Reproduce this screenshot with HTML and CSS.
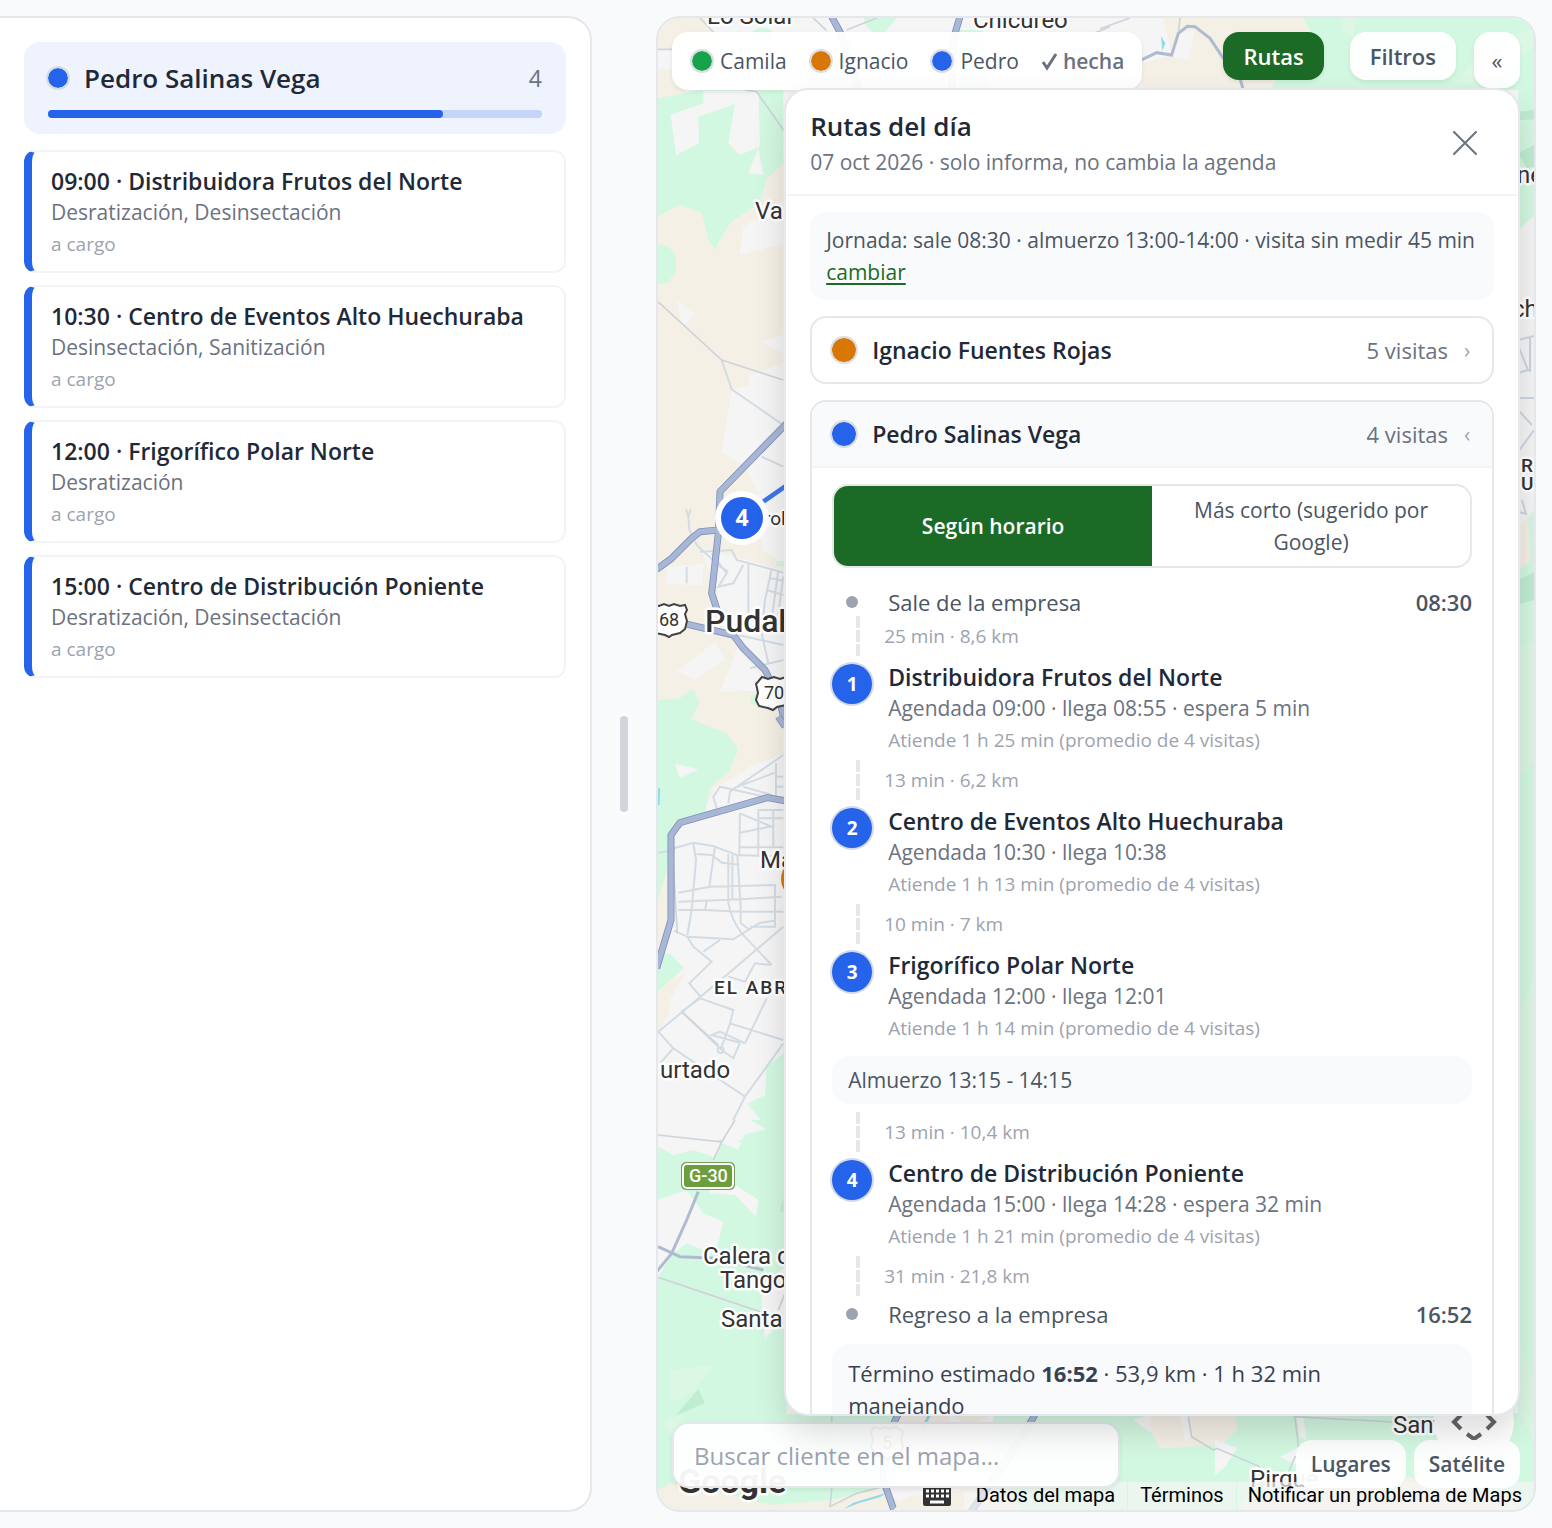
FILE: index.html
```html
<!DOCTYPE html>
<html lang="es">
<head>
<meta charset="utf-8">
<meta name="viewport" content="width=device-width, initial-scale=1">
<title>Rutas del día</title>
<link rel="stylesheet" href="styles.css">
</head>
<body>
<main class="board">
  <section class="agenda" aria-label="Agenda">
    <header class="tech">
      <div class="tech-row">
        <span class="dot dot-blue"></span>
        <h2 class="tech-name">Pedro Salinas Vega</h2>
        <span class="tech-count">4</span>
      </div>
      <div class="bar"><div class="bar-fill" style="width:80%"></div></div>
    </header>
    <article class="visit">
      <h3 class="item-title">09:00 · Distribuidora Frutos del Norte</h3>
      <p class="item-sub">Desratización, Desinsectación</p>
      <p class="item-note">a cargo</p>
    </article>
    <article class="visit">
      <h3 class="item-title">10:30 · Centro de Eventos Alto Huechuraba</h3>
      <p class="item-sub">Desinsectación, Sanitización</p>
      <p class="item-note">a cargo</p>
    </article>
    <article class="visit">
      <h3 class="item-title">12:00 · Frigorífico Polar Norte</h3>
      <p class="item-sub">Desratización</p>
      <p class="item-note">a cargo</p>
    </article>
    <article class="visit">
      <h3 class="item-title">15:00 · Centro de Distribución Poniente</h3>
      <p class="item-sub">Desratización, Desinsectación</p>
      <p class="item-note">a cargo</p>
    </article>
  </section>

  <div class="splitter" role="separator" aria-orientation="vertical"><span class="grip"></span></div>

  <section class="map" aria-label="Mapa">
    <svg class="map-art" viewBox="658 18 876 1492" preserveAspectRatio="xMinYMin slice" aria-hidden="true">
      <rect class="m-city" x="658" y="18" width="876" height="1492"/>
      <!-- north-west -->
      <g transform="translate(650 0) scale(.33333)">
        <path class="m-sand" d="M24 54H150L195 96V145H24ZM24 205L70 212 120 262 100 280 24 295Z"/>
        <path class="m-green" d="M24 295L160 268H400V490L350 540 330 610 240 670 195 750 175 720 155 640 90 615 24 650Z"/>
        <path class="m-sand" d="M24 650L90 615 155 640 175 720 195 750 240 670 330 610 350 540 400 490V900H24Z"/>
        <path class="m-green" d="M24 730L58 742 77 768V820L50 850 24 852ZM640 54H740L690 115 650 80ZM305 96Q340 70 370 96V130H300ZM920 90H1000L1020 265H930Z"/>
        <path class="m-city" d="M160 272H325L330 440 268 465 235 430 255 312 145 350 147 430 78 465 62 345 160 310ZM325 445L340 525 295 520ZM280 680L325 655 400 600V730L270 765Z"/>
        <path class="m-lane" d="M24 148H66M285 270L320 275 400 390M490 54L530 92M150 54L190 96M590 90L680 54M570 96L620 160M1335 98L1380 80"/>
        <path class="m-hwy-edge" d="M545 50L570 96 600 190 625 270M930 50L912 110 905 270"/>
        <path class="m-hwy" d="M545 50L570 96 600 190 625 270M930 50L912 110 905 270"/>
      </g>
      <!-- north-east -->
      <g transform="translate(1100 0) scale(.33333)">
        <path class="m-sand" d="M190 54H610L640 110 600 180 540 215 510 270H126V190L215 165Z"/>
        <path class="m-city" d="M238 100L285 90 265 180 215 170Z"/>
        <path class="m-green" d="M610 54H1310V640L1255 690V270H510L540 215 600 180 640 110Z"/>
        <path class="m-green-soft" d="M720 54H770L760 110 730 95ZM1070 250L1120 180 1300 80V140L1180 250Z"/>
        <path class="m-green-dark" d="M1255 335L1310 328V358L1255 360ZM1255 460L1310 430V500L1280 505Z"/>
        <path class="m-water" d="M183 108L196 130 187 152Z"/>
        <path class="m-lane" d="M0 86L90 54M240 54L236 95M1262 750L1270 720"/>
        <path class="m-river" d="M120 182L170 158 215 165 235 100 262 79 285 80 330 115 370 175 420 235 430 270"/>
      </g>
      <!-- Pudahuel -->
      <g transform="translate(650 300) scale(.33333)">
        <path class="m-sand" d="M24 -5H400V190L295 228 300 255 245 270 215 455 290 505 330 600 335 750 400 790V810L150 742 200 870 215 980 340 1130 400 1180V1265H24Z"/>
        <path class="m-city" d="M80 0L135 40 98 82ZM330 125L400 105V160ZM52 800L162 792 155 855 48 852ZM82 1112L195 1025 225 1080 132 1140ZM262 1045L330 1125 320 1172 210 1175Z"/>
        <path class="m-green" d="M24 1200L90 1195 128 1165 148 1205 120 1265H24ZM380 785L402 782V798H378ZM302 1185H320L345 1222 302 1212Z"/>
        <path class="m-grid" d="M215 180L245 268 400 375M335 470L400 500M108 628L115 650 118 690 140 735 210 800 235 815M122 628L115 652M150 755L245 750 260 780 365 808 345 900 335 1000 355 1090M295 790V990M185 760L230 820 205 860 250 850 280 795M365 808L400 818M362 835L400 842M350 870L400 885M385 810L365 960M400 830L380 980M110 800V850M265 1005L400 1035M300 1105L400 1080"/>
        <path class="m-lane" d="M24 5L215 180 400 240"/>
        <path class="m-hwy-edge" d="M410 370L210 575 205 700 185 880 205 940M205 690L150 695 125 715 65 775 20 808M100 970L250 1005 280 1045 345 1110 385 1190 405 1265"/>
        <path class="m-hwy" d="M410 370L210 575 205 700 185 880 205 940M205 690L150 695 125 715 65 775 20 808M100 970L250 1005 280 1045 345 1110 385 1190 405 1265"/>
        <path class="m-route" d="M340 605L410 556"/>
      </g>
      <!-- Maipú and Padre Hurtado -->
      <g transform="translate(650 720) scale(.33333)">
        <path class="m-sand" d="M118 -5H410V100L300 140 200 210 160 260 24 530V935L60 820 120 780 60 700 70 300Z"/>
        <path class="m-green" d="M24 -5H118L190 25 225 35 265 85 240 150 180 205 165 280 60 340V450L24 540ZM24 705L60 705 102 745 24 812ZM410 965V1265H265L300 1210 355 1225 290 1150 345 1125 350 1040Z"/>
        <path class="m-city" d="M75 132L145 148 90 175ZM190 205L400 100V1000L345 1045 345 1125 285 1155 350 1225 290 1260H24V935L80 780 24 700 65 600V330L180 270Z"/>
        <path class="m-green" d="M24 705L60 700 102 745 24 812Z"/>
        <path class="m-sand" d="M24 815L110 752 60 840 58 880 24 935ZM30 520L60 420V590L24 690Z"/>
        <path class="m-grid" d="M200 265L190 230 210 200 390 240M235 250L240 215 400 105M250 205L375 158M280 200L365 225M378 130V240M380 170H400M380 200H400M24 398L75 390M72 385L130 368 190 378 260 405 400 410M130 368L138 420 125 570 112 645M195 380L178 500M140 402L185 405 215 428 268 434M235 402V550Q245 600 275 640L365 735M247 405V540M262 405L272 560V610L300 630M270 280L268 408M270 280L370 322M325 405V270H400M325 295H400M270 338L370 318V380M370 270V380M268 382H400M85 518L180 500 375 495V605M85 545L270 538 395 530M85 570H165L272 575H400M170 545L165 570M112 650L250 658 330 608 375 602V620H300M72 632L112 650 130 680 185 725 118 790 150 828M160 695L210 660M235 770L285 785 315 730 360 735M400 620L230 765 25 935M95 875L150 835 250 870 240 910 400 960M95 875L215 990 250 1015 270 968M240 910L215 980M285 970L350 835M270 968L185 945 210 935 285 970M25 935L70 985 285 1130 400 970M70 985L30 1030M285 1130L220 1260M24 1245L215 1262"/>
        <path class="m-lane" d="M70 440L82 640M95 875L205 975"/>
        <circle class="m-grid" cx="212" cy="990" r="9"/>
        <path class="m-hwy-edge" d="M410 243L352 233 90 308 63 345V600L20 745M385 -10L405 20"/>
        <path class="m-hwy" d="M410 243L352 233 90 308 63 345V600L20 745M385 -10L405 20"/>
        <path class="m-water-line" d="M26 205L24 255"/>
      </g>
      <!-- Calera de Tango -->
      <g transform="translate(650 1120) scale(.33333)">
        <path class="m-green" d="M24 60L70 105 130 90 190 110 215 68 265 90 300 0H410V900H560L570 1180H24Z"/>
        <path class="m-city" d="M170 185L215 170 325 240 318 290 255 225 180 220ZM24 240L110 210 160 280 220 305 195 405 110 370 70 400 24 470ZM24 0H300L350 28 210 60 70 105 24 80ZM335 500L405 440V590L345 655 335 570Z"/>
        <path class="m-green-soft" d="M60 750L190 735 130 815 60 850ZM100 880L65 945 40 905Z"/>
        <path class="m-green-dark" d="M145 808L165 850 75 888ZM400 235V275L390 272Z"/>
        <path class="m-sand" d="M24 1110L60 1090 220 1120 340 1150 540 1110 700 1110 800 1180H24ZM700 880H900V910H700Z"/>
        <path class="m-green" d="M400 882H735V1095L540 1140 360 1155 280 1080Z"/>
        <path class="m-lane" d="M24 45L215 66 190 120M215 66L255 0M24 472L330 575M385 570L405 520M545 885V1110L540 1160 620 1120 720 1095"/>
        <path class="m-river" d="M145 215L110 300 65 400 20 455M24 380L90 410 200 415 340 450"/>
        <path class="m-water" d="M580 1168L610 1148 710 1118 690 1132 625 1150Z"/>
        <path class="m-hwy-edge" d="M745 880L700 980V1080L735 1180"/>
        <path class="m-hwy" d="M745 880L700 980V1080L735 1180"/>
        <path class="m-water-line" d="M840 882L815 930"/>
      </g>
      <!-- south -->
      <g transform="translate(1100 1300) scale(.33333)">
        <path class="m-green" d="M-320 340H1310V650H-320Z"/>
        <path class="m-sand" d="M-580 590L-320 560-200 650H-640ZM-440 345H-330L-400 385ZM150 345H405L415 385 370 430 270 440 180 445 155 400 100 360ZM430 600L600 570 930 530 1010 560 1300 580V640H420Z"/>
        <path class="m-city" d="M345 420L412 445 375 500 345 525ZM100 360L150 345 155 400ZM240 345H270L280 410 255 420ZM540 470L600 440 600 500ZM590 350H610L620 420 600 410Z"/>
        <path class="m-hwy-edge" d="M-195 345L-260 450-390 640"/>
        <path class="m-hwy" d="M-195 345L-260 450-390 640"/>
        <path class="m-lane" d="M265 350L275 410 340 450 350 445 480 500M580 350L880 366M585 350L595 440M565 520L585 470 620 480"/>
      </g>
      <!-- east edge -->
      <g>
        <rect class="m-city" x="1518" y="230" width="18" height="160"/>
        <path class="m-green" d="M1518 530L1534 510V1510H1518Z"/>
        <path class="m-green-dark" d="M1518 580L1534 572V600L1518 604Z"/>
        <path class="m-green-soft" d="M1518 650L1534 640V760L1518 780ZM1518 1010L1534 980V1120H1518ZM1518 1340L1534 1380V1440L1518 1410Z"/>
        <path class="m-sand" d="M1518 530L1528 515 1531 560 1518 570Z"/>
        <path d="M1518 340L1534 336M1518 345L1528 370 1518 373M1530 337V372M1518 398H1534M1518 410L1532 425M1518 452L1534 430M1522 500L1526 514 1519 512" fill="none" stroke="#cdd6e0" stroke-width="2"/>
      </g>

      <!-- road shields -->
      <g class="m-shield">
        <path d="M652 604l7 2 5-2 5 2 5-2 6 2 5-1 2 5-2 4 2 7-2 8-5 4-8 2-3 2-4-2-10-2z"/>
        <path d="M762 677l6 2 6-2 6 2 6-2v28l-9 2-4 3-5-2-9-2-3-6 2-7-1-5-1-4z"/>
        <path d="M874 1427l6 2 5-2 5 2 6-2 7 5-2 7 2 8-4 8-8 2-3 3-4-3-9-2-4-8 2-7-2-8z"/>
      </g>
      <text class="m-num" x="659" y="626">68</text>
      <text class="m-num" x="764" y="699">70</text>
      <text class="m-num" x="882" y="1449">5</text>
      <rect x="681" y="1162" width="54" height="28" rx="5" fill="#7d9b5a"/>
      <rect x="683" y="1164" width="50" height="24" rx="4" fill="#6b9e3c" stroke="#fff" stroke-width="2"/>
      <text class="m-sign" x="689" y="1182">G-30</text>

      <!-- place names -->
      <g class="m-place">
        <text x="707" y="24">Lo Solar</text>
        <text x="973" y="28">Chicureo</text>
        <text x="755" y="219">Va</text>
        <text x="660" y="1078">urtado</text>
        <text x="760" y="868">Ma</text>
        <text x="703" y="1264">Calera de</text>
        <text x="720" y="1288">Tango</text>
        <text x="721" y="1327">Santa</text>
        <text x="1393" y="1433">Santa</text>
        <text x="1250" y="1487">Pirque</text>
        <text x="1517" y="183">ne</text>
        <text x="1512" y="317">ch</text>
      </g>
      <g class="m-area">
        <text x="764" y="525">rol</text>
        <text class="m-wide" x="714" y="994">EL ABR</text>
        <text class="m-wide" x="1521" y="472">R</text>
        <text class="m-wide" x="1521" y="490">U</text>
      </g>
      <text class="m-town" x="705" y="632">Pudahuel</text>

      <!-- visit pins -->
      <circle cx="801" cy="879" r="20" fill="#d97706"/>
      <circle cx="742" cy="518" r="27" fill="#fff"/>
      <circle cx="742" cy="518" r="21" fill="#2563eb"/>
      <text class="m-pin" x="742" y="526">4</text>
      <text class="m-logo" x="678" y="1493">Google</text>

      <!-- pan control -->
      <circle cx="1474" cy="1422" r="40" fill="#fff"/>
      <path d="M1461 1415l-7 7 7 7M1487 1415l7 7-7 7M1467 1434l7 5 7-5" fill="none" stroke="#666" stroke-width="4"/>
    </svg>

    <div class="credits">
      <svg class="keys" viewBox="0 0 28 20" aria-hidden="true">
        <rect width="28" height="20" rx="2" fill="#333"/>
        <path d="M3 5h3M8 5h3M13 5h3M18 5h3M23 5h3M3 10h3M8 10h3M13 10h3M18 10h3M23 10h3M7 16h14" stroke="#fff" stroke-width="3"/>
      </svg>
      <span class="credit">Datos del mapa</span>
      <a class="credit" href="#terminos">Términos</a>
      <a class="credit" href="#notificar">Notificar un problema de Maps</a>
    </div>

    <div class="legend">
      <span class="legend-item"><span class="dot dot-green"></span>Camila</span>
      <span class="legend-item"><span class="dot dot-orange"></span>Ignacio</span>
      <span class="legend-item"><span class="dot dot-blue"></span>Pedro</span>
      <span class="legend-item legend-done"><svg class="tick" viewBox="0 0 18 20" aria-hidden="true"><path d="M2 11l4 6L15 3" fill="none" stroke="#6b7280" stroke-width="3"/></svg>hecha</span>
    </div>
    <div class="tools">
      <button class="tool tool-on" type="button">Rutas</button>
      <button class="tool" type="button">Filtros</button>
      <button class="tool tool-fold" type="button" aria-label="Contraer">«</button>
    </div>

    <input class="search" type="search" placeholder="Buscar cliente en el mapa..." aria-label="Buscar cliente en el mapa">
    <div class="layers">
      <button class="layer" type="button">Lugares</button>
      <button class="layer" type="button">Satélite</button>
    </div>

    <aside class="panel" aria-label="Rutas del día">
      <header class="panel-head">
        <div>
          <h2 class="panel-title">Rutas del día</h2>
          <p class="panel-sub">07 oct 2026 · solo informa, no cambia la agenda</p>
        </div>
        <button class="close" type="button" aria-label="Cerrar"><svg viewBox="0 0 24 24" width="24" height="24" aria-hidden="true"><path d="M1 1l22 22M23 1L1 23" stroke="#6b7280" stroke-width="2" stroke-linecap="round"/></svg></button>
      </header>
      <div class="panel-body">
        <p class="info">Jornada: sale 08:30 · almuerzo 13:00-14:00 · visita sin medir 45 min <a class="link" href="#jornada">cambiar</a></p>

        <section class="route">
          <button class="route-head" type="button" aria-expanded="false">
            <span class="dot dot-big dot-orange"></span><span class="route-name">Ignacio Fuentes Rojas</span>
            <span class="route-count">5 visitas</span><span class="chev">›</span>
          </button>
        </section>

        <section class="route">
          <button class="route-head route-open" type="button" aria-expanded="true">
            <span class="dot dot-big dot-blue"></span><span class="route-name">Pedro Salinas Vega</span>
            <span class="route-count">4 visitas</span><span class="chev">‹</span>
          </button>
          <div class="route-body">
            <div class="modes">
              <button class="mode mode-on" type="button">Según horario</button>
              <button class="mode" type="button">Más corto (sugerido por Google)</button>
            </div>

            <div class="end"><span class="end-dot"></span><span class="end-name">Sale de la empresa</span><span class="end-time">08:30</span></div>
            <p class="leg">25 min · 8,6 km</p>
            <div class="stop"><span class="badge">1</span><div>
              <h3 class="item-title">Distribuidora Frutos del Norte</h3>
              <p class="item-sub">Agendada 09:00 · llega 08:55 · espera 5 min</p>
              <p class="item-note">Atiende 1 h 25 min (promedio de 4 visitas)</p></div></div>
            <p class="leg">13 min · 6,2 km</p>
            <div class="stop"><span class="badge">2</span><div>
              <h3 class="item-title">Centro de Eventos Alto Huechuraba</h3>
              <p class="item-sub">Agendada 10:30 · llega 10:38</p>
              <p class="item-note">Atiende 1 h 13 min (promedio de 4 visitas)</p></div></div>
            <p class="leg">10 min · 7 km</p>
            <div class="stop"><span class="badge">3</span><div>
              <h3 class="item-title">Frigorífico Polar Norte</h3>
              <p class="item-sub">Agendada 12:00 · llega 12:01</p>
              <p class="item-note">Atiende 1 h 14 min (promedio de 4 visitas)</p></div></div>
            <p class="lunch">Almuerzo 13:15 - 14:15</p>
            <p class="leg">13 min · 10,4 km</p>
            <div class="stop"><span class="badge">4</span><div>
              <h3 class="item-title">Centro de Distribución Poniente</h3>
              <p class="item-sub">Agendada 15:00 · llega 14:28 · espera 32 min</p>
              <p class="item-note">Atiende 1 h 21 min (promedio de 4 visitas)</p></div></div>
            <p class="leg">31 min · 21,8 km</p>
            <div class="end"><span class="end-dot"></span><span class="end-name">Regreso a la empresa</span><span class="end-time">16:52</span></div>
            <p class="total">Término estimado <strong>16:52</strong> · 53,9 km · 1 h 32 min manejando</p>
          </div>
        </section>
      </div>
    </aside>
  </section>
</main>
</body>
</html>
```
FILE: styles.css
```css
* { box-sizing: border-box; }

body {
  margin: 0;
  background: #f9fafb;
  color: #1f2937;
  font-family: "Open Sans", "Noto Sans", sans-serif;
  font-size: 21px;
}

h2, h3, p { margin: 0; font-weight: 400; }
button, input { font: inherit; color: inherit; margin: 0; }
button { border: 0; background: none; padding: 0; cursor: pointer; }

.board {
  display: grid;
  grid-template-columns: minmax(0, 37fr) 64px minmax(0, 55fr);
  height: 100vh;
  padding: 16px 16px 16px 0;
}

/* Agenda column */
.agenda {
  display: flex;
  flex-direction: column;
  gap: 12px;
  padding: 24px;
  background: #fff;
  border: 2px solid #e5e7eb;
  border-left: 0;
  border-radius: 0 24px 24px 0;
}
.tech {
  padding: 16px 24px;
  margin-bottom: 4px;
  border-radius: 16px;
  background: #eef3fd;
}
.tech-row { display: flex; align-items: center; gap: 14px; height: 40px; margin-bottom: 12px; }
.tech-row .dot { margin-left: -2px; }
.tech-name { flex: 1; font-size: 26px; font-weight: 600; }
.tech-count { font-size: 23px; color: #6b7280; }
.bar { height: 8px; border-radius: 4px; background: #c5d5f9; }
.bar-fill { height: 8px; border-radius: 4px; background: #2563eb; }

.visit {
  padding: 13px 19px 10px;
  border: 2px solid #f3f4f6;
  border-left: 8px solid #2563eb;
  border-radius: 12px;
}
.item-title { font-size: 23px; line-height: 32px; font-weight: 600; }
.item-sub { font-size: 21px; line-height: 30px; color: #6b7280; }
.item-note { font-size: 19px; line-height: 34px; color: #9ca3af; }

.dot {
  flex: none;
  width: 24px;
  height: 24px;
  border: 2px solid rgba(209, 213, 219, .8);
  border-radius: 50%;
  background-clip: padding-box;
}
.dot-big { width: 28px; height: 28px; }
.dot-green { background-color: #16a34a; }
.dot-orange { background-color: #d97706; }
.dot-blue { background-color: #2563eb; }

.splitter { display: flex; align-items: center; justify-content: center; }
.grip { width: 8px; height: 96px; border-radius: 4px; background: #d1d5db; }

/* Map */
.map {
  position: relative;
  overflow: hidden;
  border: 2px solid #e5e7eb;
  border-radius: 24px;
  background: #f5f5f5;
}
.map-art { position: absolute; inset: 0; width: 100%; height: 100%; font-family: Roboto, sans-serif; }
.m-city { fill: #f5f5f6; }
.m-sand { fill: #f5f0e6; }
.m-green { fill: #d3f8e2; }
.m-green-soft { fill: #dcf7e4; }
.m-green-dark { fill: #c0ecd2; }
.m-water { fill: #8fd9ea; }
.m-water-line { fill: none; stroke: #8fd9ea; stroke-width: 9; }
.m-lane { fill: none; stroke: #cfd3da; stroke-width: 5; }
.m-grid { fill: none; stroke: #d3dce3; stroke-width: 6; }
.m-river { fill: none; stroke: #b0bbd2; stroke-width: 9; }
.m-hwy-edge { fill: none; stroke: #7f8fba; stroke-width: 21; stroke-linejoin: round; }
.m-hwy { fill: none; stroke: #a8b7d6; stroke-width: 16; stroke-linejoin: round; }
.m-route { fill: none; stroke: #4175e8; stroke-width: 14; }
.m-shield { fill: #fff; stroke: #444; stroke-width: 2; }
.m-num { font-size: 18px; fill: #333; }
.m-sign { font-size: 18px; fill: #fff; font-weight: 500; }
.m-place, .m-area, .m-town, .m-logo { fill: #333; stroke: #fff; stroke-width: 5px; stroke-linejoin: round; paint-order: stroke; }
.m-place { font-size: 24px; }
.m-area { font-size: 19px; }
.m-wide { font-weight: 500; letter-spacing: 2px; }
.m-town { font-size: 32px; font-weight: 500; }
.m-pin { font-family: "Open Sans", sans-serif; font-size: 23px; font-weight: 700; fill: #fff; text-anchor: middle; }
.m-logo { font-size: 34px; font-weight: 700; }

.credits {
  position: absolute;
  right: 0;
  bottom: 0;
  display: flex;
  align-items: center;
  gap: 1px;
  height: 28px;
  font-family: Roboto, sans-serif;
  font-size: 20px;
  color: #000;
}
.keys { width: 28px; height: 20px; margin-right: 12px; }
.credit { padding: 0 12px 2px; line-height: 26px; color: #000; text-decoration: none; background: rgba(245, 245, 245, .7); }
.credit:last-child { padding-left: 11px; }

.legend {
  position: absolute;
  left: 14px;
  top: 14px;
  display: flex;
  align-items: center;
  gap: 22px;
  height: 58px;
  padding: 0 18px;
  border-radius: 16px;
  background: rgba(255, 255, 255, .95);
  box-shadow: 0 2px 4px rgba(0, 0, 0, .08);
  color: #4b5563;
}
.legend-item { display: flex; align-items: center; gap: 6px; }
.legend-done { font-weight: 600; color: #6b7280; gap: 4px; }
.tick { width: 18px; height: 20px; }

.tools { position: absolute; right: 14px; top: 14px; display: flex; align-items: flex-start; gap: 18px; }
.tool {
  height: 48px;
  padding: 0 20px;
  border-radius: 16px;
  background: rgba(255, 255, 255, .95);
  box-shadow: 0 2px 4px rgba(0, 0, 0, .08);
  color: #4b5563;
  font-size: 22px;
  font-weight: 600;
}
.tool-on { margin-right: 8px; background: #1b6b27; color: #fff; }
.tool-fold { width: 46px; height: 56px; padding: 0; font-weight: 400; }

.search {
  position: absolute;
  left: 14px;
  bottom: 22px;
  width: 448px;
  height: 66px;
  padding: 0 20px;
  border: 2px solid #e5e7eb;
  border-radius: 16px;
  background: rgba(255, 255, 255, .95);
  box-shadow: 0 2px 4px rgba(0, 0, 0, .08);
  font-size: 24px;
}
.search::placeholder { color: #9ca3af; opacity: 1; }

.layers { position: absolute; right: 14px; bottom: 22px; display: flex; gap: 8px; }
.layer {
  height: 48px;
  padding: 0 15px;
  border-radius: 16px;
  background: rgba(255, 255, 255, .95);
  color: #4b5563;
  font-weight: 600;
}

/* Routes panel */
.panel {
  position: absolute;
  top: 70px;
  right: 14px;
  bottom: 94px;
  width: 84%;
  display: flex;
  flex-direction: column;
  overflow: hidden;
  border: 2px solid #e5e7eb;
  border-radius: 24px;
  background: #fff;
  box-shadow: 0 16px 32px rgba(0, 0, 0, .14);
}
.panel-head {
  display: flex;
  justify-content: space-between;
  align-items: center;
  padding: 17px 41px 15px 24px;
  border-bottom: 2px solid #f3f4f6;
}
.panel-title { font-size: 26px; line-height: 38px; font-weight: 600; }
.panel-sub { line-height: 34px; color: #6b7280; }
.close { display: flex; }
.panel-body {
  flex: 1;
  min-height: 0;
  display: flex;
  flex-direction: column;
  gap: 16px;
  padding: 16px 24px;
  overflow-y: auto;
  scrollbar-width: none;
}
.info, .lunch, .total { border-radius: 16px; background: #f9fafb; line-height: 32px; color: #4b5563; }
.info { padding: 12px 16px; }
.link { color: #1b6b27; text-decoration: underline; text-underline-offset: 3px; }

.route { flex: none; border: 2px solid #e5e7eb; border-radius: 16px; overflow: hidden; }
.route-head { display: flex; align-items: center; width: 100%; height: 64px; padding: 0 18px; text-align: left; }
.route-open { height: 66px; background: #f9fafb; border-bottom: 2px solid #f3f4f6; }
.route-name { flex: 1; margin-left: 14px; font-size: 23px; font-weight: 600; }
.route-count { font-size: 22px; color: #6b7280; }
.chev { width: 8px; margin: 0 2px 0 16px; color: #9ca3af; }
.route-body { padding: 16px 20px; }

.modes { display: flex; margin-bottom: 16px; border: 2px solid #e5e7eb; border-radius: 16px; overflow: hidden; }
.mode { flex: 1 1 0; padding: 8px 32px; line-height: 32px; color: #4b5563; }
.mode-on { background: #1b6b27; color: #fff; font-weight: 600; }

.end { display: flex; align-items: center; padding: 4px 0 0; line-height: 28px; font-size: 22px; color: #4b5563; }
.end-dot { width: 12px; height: 12px; margin: 0 30px 0 14px; border-radius: 50%; background: #9ca3af; }
.end-name { flex: 1; }
.end-time { font-weight: 600; }
.leg {
  padding-left: 52px;
  font-size: 19px;
  line-height: 40px;
  color: #9ca3af;
  background: repeating-linear-gradient(#e5e7eb 0 12px, transparent 12px 14px) 24px 0 / 4px 40px no-repeat;
}
.stop { display: flex; gap: 16px; padding: 5px 0 3px; }
.badge {
  flex: none;
  width: 40px;
  height: 40px;
  margin-top: 3px;
  border-radius: 50%;
  background: #2563eb;
  box-shadow: 0 0 0 2px #d1d9ea;
  color: #fff;
  font-size: 19px;
  font-weight: 700;
  line-height: 40px;
  text-align: center;
}
.lunch { margin: 8px 0; padding: 8px 16px; }
.total { margin-top: 16px; padding: 13px 32px 13px 16px; font-size: 22px; color: #374151; }
```
